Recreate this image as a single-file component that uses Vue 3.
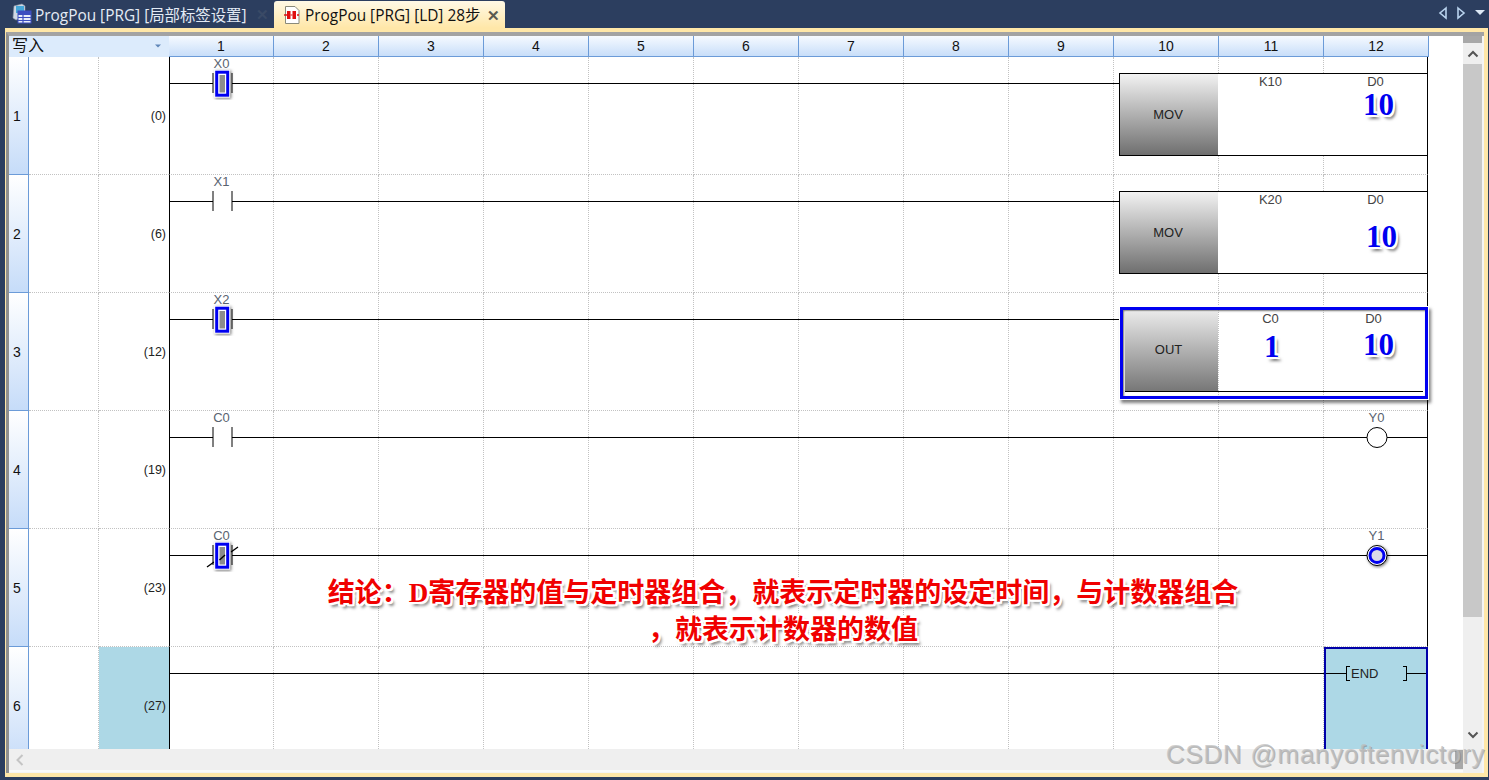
<template>
  <div class="app">
    <!-- tabs -->
    <div class="tabbar">
      <div class="tab">
        <svg class="tab-icon" width="20" height="22" viewBox="0 0 20 22">
          <path d="M2 3 L10 1 L13 3 V13 L4 17 L1 15 Z" fill="#cfd8e4" stroke="#8d99a8" stroke-width="0.6"/>
          <rect x="4" y="3" width="8" height="7" fill="#45a6d8"/>
          <rect x="6" y="8" width="13" height="12" fill="#e9eefa" stroke="#3d4fc0"/>
          <path d="M6 11.5 H19 M6 14.5 H19 M6 17.5 H19 M11 8 V20" stroke="#3d4fc0" stroke-width="1.2"/>
          <rect x="6" y="8" width="13" height="3" fill="#3d4fc0"/>
        </svg>
        <span class="tab-title">ProgPou [PRG] [局部标签设置]</span>
        <span class="tab-x dim">✕</span>
      </div>
      <div class="tab active">
        <svg class="tab-icon" width="18" height="20" viewBox="0 0 18 20">
          <path d="M2.5 1.5 H12 L16 5.5 V18.5 H2.5 Z" fill="#fff" stroke="#8a8a7a"/>
          <path d="M1 10 H4 M14 10 H16" stroke="#e01010" stroke-width="1.5"/>
          <rect x="4" y="6" width="3.5" height="8" fill="#e01010"/>
          <rect x="9.5" y="6" width="3.5" height="8" fill="#e01010"/>
          <path d="M7.5 10 H9.5" stroke="#e01010" stroke-width="1"/>
        </svg>
        <span class="tab-title">ProgPou [PRG] [LD] 28步</span>
        <span class="tab-x">✕</span>
      </div>
      <div class="tab-nav">
        <svg width="10" height="14" viewBox="0 0 10 14"><path d="M8 2 L2 7 L8 12 Z" fill="none" stroke="#b9d3ee" stroke-width="1.6"/></svg>
        <svg width="10" height="14" viewBox="0 0 10 14"><path d="M2 2 L8 7 L2 12 Z" fill="none" stroke="#b9d3ee" stroke-width="1.6"/></svg>
        <svg width="12" height="14" viewBox="0 0 12 14"><path d="M1 4 H11 L6 9 Z" fill="#dce8f5"/></svg>
      </div>
    </div>

    <div class="doc">
      <div class="frame">
        <div class="pane">
          <div class="ladder">
            <div class="head">
              <div class="head-first">
                <span>写入</span>
                <svg width="8" height="6" viewBox="0 0 8 6"><path d="M1 1.5 H7 L4 4.5 Z" fill="#5f86b8"/></svg>
              </div>
              <div v-for="n in 12" :key="n" class="head-col">{{ n }}</div>
            </div>

            <div v-for="r in rows" :key="r.no" class="row">
              <div class="cells">
                <div class="rownum">{{ r.no }}</div>
                <div class="blank"></div>
                <div :class="['step', { hit: r.end }]">({{ r.step }})</div>
                <div v-for="n in 12" :key="n" class="cell"></div>
              </div>

              <div :class="['rung', { short: r.box }]"></div>

              <div v-if="r.contact" class="contact">
                <span class="dev">{{ r.contact.label }}</span>
                <svg width="40" height="32" viewBox="0 0 40 32">
                  <rect x="11" y="13" width="19" height="5" fill="#fff"/>
                  <path d="M11 5 V25 M30 5 V25" stroke="#000" fill="none"/>
                  <path v-if="r.contact.nc" d="M5 27 L12 22 M29 12 L36 7" stroke="#000" stroke-width="1.4"/>
                  <g v-if="r.contact.on" class="glow">
                    <rect x="14.7" y="4.2" width="11" height="23" fill="#fff" stroke="#fff" stroke-width="5"/>
                    <rect x="14.7" y="4.2" width="11" height="23" fill="#fff" stroke="#0000f0" stroke-width="3"/>
                    <rect x="17.5" y="7" width="5.5" height="17.5" fill="#8c8c8c"/>
                    <path v-if="r.contact.nc" d="M17.5 20 L23 15" stroke="#000" stroke-width="1.4"/>
                  </g>
                </svg>
              </div>

              <div v-if="r.box" :class="['box', { selected: r.box.selected }]">
                <div class="op">{{ r.box.op }}</div>
                <div class="arg">{{ r.box.a }}</div>
                <div class="arg">{{ r.box.b }}</div>
              </div>

              <div v-if="r.coil" class="coil">
                <span class="dev">{{ r.coil.label }}</span>
                <svg width="28" height="28" viewBox="0 0 28 28">
                  <g :class="{ glow: r.coil.on }">
                    <circle cx="14" cy="14.5" r="10" fill="#fff" stroke="#000"/>
                    <circle v-if="r.coil.on" cx="14" cy="14.5" r="7" fill="#d8d8e8" stroke="#0000f0" stroke-width="3"/>
                  </g>
                </svg>
              </div>

              <div v-if="r.end" class="end-cell">
                <div class="end-ins">
                  <i class="br-l"></i>
                  <span>END</span>
                  <i class="br-r"></i>
                </div>
              </div>
            </div>
          </div>

          <div class="hscroll">
            <svg width="10" height="14" viewBox="0 0 10 14"><path d="M7.5 2 L2.5 7 L7.5 12" fill="none" stroke="#c4c4c4" stroke-width="2"/></svg>
            <span class="hthumb"></span>
          </div>
        </div>

        <div class="vscroll">
          <div class="v-top"></div>
          <div class="v-btn">
            <svg width="12" height="8" viewBox="0 0 12 8"><path d="M1.5 6.5 L6 2 L10.5 6.5" fill="none" stroke="#555" stroke-width="2"/></svg>
          </div>
          <div class="v-thumb"></div>
          <div class="v-btn down">
            <svg width="12" height="8" viewBox="0 0 12 8"><path d="M1.5 1.5 L6 6 L10.5 1.5" fill="none" stroke="#555" stroke-width="2"/></svg>
          </div>
        </div>
      </div>
    </div>

    <!-- hand-drawn notes on top of the screenshot -->
    <span class="num n1">10</span>
    <span class="num n2">10</span>
    <span class="num n3">1</span>
    <span class="num n4">10</span>
    <div class="note">
      <div>结论：D寄存器的值与定时器组合，就表示定时器的设定时间，与计数器组合</div>
      <div>，就表示计数器的数值</div>
    </div>
    <div class="mark">CSDN @manyoftenvictory</div>
  </div>
</template>

<script setup>
const rows = [
  { no: 1, step: 0, contact: { label: 'X0', on: true }, box: { op: 'MOV', a: 'K10', b: 'D0' } },
  { no: 2, step: 6, contact: { label: 'X1' }, box: { op: 'MOV', a: 'K20', b: 'D0' } },
  { no: 3, step: 12, contact: { label: 'X2', on: true }, box: { op: 'OUT', a: 'C0', b: 'D0', selected: true } },
  { no: 4, step: 19, contact: { label: 'C0' }, coil: { label: 'Y0' } },
  { no: 5, step: 23, contact: { label: 'C0', on: true, nc: true }, coil: { label: 'Y1', on: true } },
  { no: 6, step: 27, end: true }
]
</script>

<style>
html, body {
  margin: 0;
  background: #2c3e5f;
}
</style>

<style scoped>
.app {
  position: relative;
  width: 1489px;
  height: 780px;
  overflow: hidden;
  background: #2c3e5f;
  display: flex;
  flex-direction: column;
  font-family: "Liberation Sans", "Noto Sans CJK SC", sans-serif;
}

/* Tabs */
.tabbar {
  height: 28px;
  display: flex;
  align-items: stretch;
  flex-shrink: 0;
}

.tab {
  width: 274px;
  box-sizing: border-box;
  padding-left: 12px;
  display: flex;
  align-items: center;
  gap: 3px;
  color: #e4ebf5;
  font-family: "Open Sans", "Noto Sans CJK SC", sans-serif;
  font-size: 15.4px;
  white-space: nowrap;
}

.tab.active {
  width: 231px;
  margin-top: 1px;
  padding-left: 9px;
  gap: 4px;
  border-radius: 3px 3px 0 0;
  background: linear-gradient(#fff9e6, #ffe7a8);
  color: #111;
}

.tab-title {
  flex: 1;
}

.tab-x {
  width: 18px;
  font-size: 15px;
  font-weight: bold;
  color: #5a5a50;
}

.tab-x.dim {
  color: #3a4a66;
}

.tab-nav {
  margin-left: auto;
  padding-right: 3px;
  display: flex;
  align-items: center;
  gap: 8px;
  height: 26px;
}

/* Document frame */
.doc {
  flex: 1;
  margin: 0 1px 3px 5px;
  border-top: 4px solid #ffe7a8;
  border-bottom: 4px solid #ffe7a8;
  border-right: 4px solid #ffe7a8;
  border-left: 1px solid #ffe7a8;
  display: flex;
  min-height: 0;
}

.frame {
  flex: 1;
  display: flex;
  min-width: 0;
  border-top: 4px solid #a3a3a3;
  border-left: 3px solid #909090;
  background: #f4f4f4;
}

.pane {
  width: 1454px;
  display: flex;
  flex-direction: column;
}

.ladder {
  height: 713px;
  overflow: hidden;
  background: #fff;
}

/* Header */
.head {
  height: 21px;
  display: grid;
  grid-template-columns: 160px repeat(12, 105px);
  grid-template-rows: 21px;
  width: 1420px;
}

.head-first {
  display: flex;
  align-items: center;
  justify-content: space-between;
  padding: 0 7px 2px 3px;
  background: #dcebfc;
  color: #111;
  font-size: 16px;
  line-height: 19px;
  overflow: hidden;
}

.head-col {
  box-sizing: border-box;
  border-right: 1px solid #6b9bd8;
  border-bottom: 1px solid #6b9bd8;
  background: linear-gradient(#f6faff, #c8def9);
  text-align: center;
  font-size: 14px;
  line-height: 20px;
  color: #111;
}

/* Rungs */
.row {
  height: 118px;
  width: 1420px;
  display: grid;
  grid-template-columns: 20px 70px 70px repeat(12, 105px);
  grid-template-rows: 118px;
}

.cells {
  grid-column: 1 / -1;
  grid-row: 1;
  display: grid;
  grid-template-columns: subgrid;
}

.rownum {
  box-sizing: border-box;
  padding-left: 4px;
  display: flex;
  align-items: center;
  font-size: 14px;
  color: #111;
  background: linear-gradient(#ffffff, #c6dcf9);
  border-right: 1px solid #6b9bd8;
  border-bottom: 1px solid #6b9bd8;
}

.blank,
.step,
.cell {
  box-sizing: border-box;
  border-right: 1px dotted #c2c2c2;
  border-bottom: 1px dotted #c2c2c2;
}

.step {
  display: flex;
  align-items: center;
  justify-content: flex-end;
  padding-right: 3px;
  font-size: 12.5px;
  color: #222;
  border-right: none;
}

.step.hit {
  background: #add8e6;
}

.cell:nth-child(4) {
  border-left: 1px solid #000;
}

.cell:last-child {
  margin-right: 1px;
  border-right: 1px solid #000;
}

.rung {
  grid-column: 4 / -1;
  grid-row: 1;
  align-self: start;
  height: 1px;
  margin: 26px 1px 0 1px;
  background: #000;
}

.rung.short {
  margin-right: 310px;
}

.contact,
.coil {
  grid-row: 1;
  display: flex;
  flex-direction: column;
  align-items: center;
}

.contact {
  grid-column: 4;
}

.coil {
  grid-column: 15;
}

.contact svg {
  margin-top: -3px;
}

.coil svg {
  margin-top: -2px;
}

.dev {
  height: 14px;
  line-height: 13px;
  font-size: 13px;
  color: #59636f;
}

.glow {
  filter: drop-shadow(1.5px 1.5px 1.5px rgba(0, 0, 0, 0.55));
}

/* Instruction box */
.box {
  grid-column: 13 / 16;
  grid-row: 1;
  align-self: start;
  box-sizing: border-box;
  height: 83px;
  margin: 16px 1px 0 5px;
  border: 1px solid #000;
  background: #fff;
  display: grid;
  grid-template-columns: 98px 105px 1fr;
  font-size: 13px;
  color: #444;
}

.op {
  display: flex;
  align-items: center;
  justify-content: center;
  padding: 0 2px 1px 0;
  color: #222;
  background: linear-gradient(#f2f2f2, #6f6f6f);
}

.arg {
  padding-top: 1px;
  text-align: center;
  line-height: 13px;
}

.arg:last-child {
  padding-left: 1px;
}

.box.selected {
  height: 92px;
  margin: 14px 1px 0 6px;
  padding: 2px;
  border: 3px solid #0000f0;
  background: transparent;
  grid-template-columns: 93px 105px 1fr;
  grid-template-rows: 80px;
  box-shadow: 0 0 0 1px #fff, 2px 3px 3px 1px rgba(0, 0, 0, 0.5), inset 1px 1px 2px #777;
}

.box.selected .op,
.box.selected .arg {
  border-bottom: 1px solid #000;
}

.box.selected .arg {
  margin-top: -1px;
}

.box.selected .op {
  padding: 0 6px 4px 0;
  background: linear-gradient(#e8e8e8, #777);
}

/* END */
.end-cell {
  grid-column: 15;
  grid-row: 1;
  box-sizing: border-box;
  margin-right: 1px;
  padding-top: 17px;
  border: 2px solid #0000a8;
  background: #add8e6;
  position: relative;
}

.end-cell::before {
  content: "";
  position: absolute;
  left: 0;
  right: 0;
  top: 24px;
  height: 1px;
  background: #000;
}

.end-ins {
  position: relative;
  width: 61px;
  height: 15px;
  margin-left: 20px;
  display: flex;
  align-items: center;
  background: #add8e6;
  font-size: 13px;
  color: #222;
}

.end-ins span {
  flex: 1;
  padding-left: 1px;
}

.br-l,
.br-r {
  align-self: stretch;
  width: 3px;
  border: solid #000;
  border-width: 1px 0;
}

.br-l {
  border-left: 1px solid #000;
}

.br-r {
  border-right: 1px solid #000;
}

/* Scrollbars */
.hscroll {
  height: 21px;
  position: relative;
  display: flex;
  align-items: center;
  padding-left: 6px;
  background: #efefef;
  border-bottom: 2px solid #fafafa;
}

.hthumb {
  position: absolute;
  right: 0;
  top: 1px;
  bottom: 1px;
  width: 8px;
  background: #a8a8a8;
}

.vscroll {
  width: 19px;
  display: flex;
  flex-direction: column;
  background: #efefef;
}

.v-top {
  height: 7px;
  background: #a8a8a8;
}

.v-btn {
  height: 21px;
  display: flex;
  align-items: center;
  justify-content: center;
}

.v-thumb {
  height: 553px;
  background: #c8c8c8;
}

.v-btn.down {
  margin-top: 107px;
}

/* Notes */
.num {
  position: absolute;
  font-family: "Liberation Serif", serif;
  font-weight: bold;
  font-size: 31px;
  line-height: 20px;
  color: #0000f0;
  text-shadow: 2px 0 #fff, -2px 0 #fff, 0 2px #fff, 0 -2px #fff, 2px 2px #fff, -2px 2px #fff, 2px -2px #fff, -2px -2px #fff, 3px 4px 3px rgba(0, 0, 0, 0.55);
}

.n1 { left: 1363px; top: 95px; }
.n2 { left: 1366px; top: 227px; }
.n3 { left: 1264px; top: 337px; }
.n4 { left: 1363px; top: 335px; }

.note {
  position: absolute;
  left: 293px;
  top: 575px;
  width: 980px;
  text-align: center;
  font-family: "Liberation Serif", "Noto Sans CJK SC", serif;
  font-weight: bold;
  font-size: 27px;
  line-height: 37px;
  color: #f00000;
  text-shadow: 2px 0 #fff, -2px 0 #fff, 0 2px #fff, 0 -2px #fff, 2px 2px #fff, -2px 2px #fff, 2px -2px #fff, -2px -2px #fff, 3px 4px 3px rgba(0, 0, 0, 0.5);
}

.mark {
  position: absolute;
  right: 4px;
  top: 739px;
  font-size: 26px;
  line-height: 30px;
  letter-spacing: 0.7px;
  white-space: nowrap;
  color: rgba(190, 190, 190, 0.75);
  text-shadow: 1px 1px 0 rgba(120, 120, 120, 0.5);
}
</style>
